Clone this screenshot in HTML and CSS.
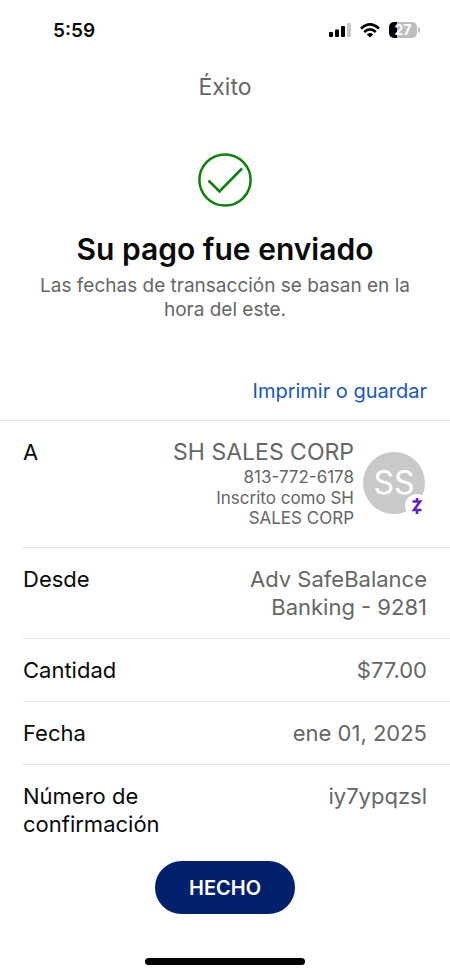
FILE: index.html
```html
<!DOCTYPE html>
<html lang="es">
<head>
<meta charset="utf-8">
<meta name="viewport" content="width=device-width, initial-scale=1">
<title>Éxito</title>
<link rel="stylesheet" href="styles.css">
</head>
<body>
<div class="status">
  <span class="time">5:59</span>
  <div class="indicators">
    <svg width="22" height="14" viewBox="0 0 22 14" aria-hidden="true"><rect x="0" y="9" width="4" height="5" rx="1"/><rect x="6" y="6.5" width="4" height="7.5" rx="1"/><rect x="12" y="3" width="4" height="11" rx="1"/><rect x="18" y="0" width="4" height="14" rx="1" fill="#c8c8c8"/></svg>
    <svg width="20" height="15" viewBox="0 0 20 15" fill="none" stroke="#000" stroke-width="2.6" aria-hidden="true"><path d="M1 5.6Q10-2.8 19 5.6M4.2 9Q10 3.6 15.8 9"/><path d="M10 14.6 6.8 11.4Q10 8.6 13.2 11.4Z" fill="#000" stroke="none"/></svg>
    <span class="battery"><span class="level">27</span></span>
  </div>
</div>
<header class="title">Éxito</header>
<main>
  <section class="hero">
    <svg class="check" width="54" height="54" viewBox="0 0 54 54" fill="none" stroke="#0d800d" aria-hidden="true"><circle cx="27" cy="27" r="25.6" stroke-width="2.5"/><path d="M10.5 27.5 21.5 38.5 44 15.5" stroke-width="2.6"/></svg>
    <h1>Su pago fue enviado</h1>
    <p>Las fechas de transacción se basan en la hora del este.</p>
  </section>
  <div class="print"><a href="#">Imprimir o guardar</a></div>
  <dl>
    <div class="row recipient">
      <dt>A</dt>
      <dd>
        <div class="payee"><div class="name">SH SALES CORP</div><div class="phone">813-772-6178</div><div class="alias">Inscrito como SH SALES CORP</div></div>
        <div class="avatar">SS<span class="badge"><svg width="12" height="18" viewBox="0 0 12 18" fill="none" stroke="#6420c8" stroke-width="2.6" aria-hidden="true"><path d="M1.5 4.5H9L3 13H10.5M6 1V4.5M6 13V17"/></svg></span></div>
      </dd>
    </div>
    <div class="row account"><dt>Desde</dt><dd>Adv SafeBalance Banking - 9281</dd></div>
    <div class="row"><dt>Cantidad</dt><dd>$77.00</dd></div>
    <div class="row"><dt>Fecha</dt><dd>ene 01, 2025</dd></div>
    <div class="row confirmation"><dt>Número de confirmación</dt><dd>iy7ypqzsl</dd></div>
  </dl>
</main>
<footer><button type="button">HECHO</button><div class="home"></div></footer>
</body>
</html>
```
FILE: styles.css
```css
* { box-sizing: border-box; }
body { margin: 0; min-height: 100vh; display: flex; flex-direction: column; background: #fff; color: #0a0a0a; font-family: Inter, "Liberation Sans", sans-serif; }
.status { display: flex; justify-content: space-between; align-items: center; height: 60px; padding: 0 33px 0 53px; }
.time { font-size: 19px; font-weight: 600; }
.indicators { display: flex; align-items: center; gap: 9px; }
.battery { position: relative; width: 28px; height: 16px; border-radius: 5px; background: linear-gradient(90deg, #000 27%, #bdbdbd 27%); }
.battery::after { content: ""; position: absolute; right: -3px; top: 5px; width: 2px; height: 6px; border-radius: 0 2px 2px 0; background: #bdbdbd; }
.level { display: block; color: #fff; text-align: center; font-size: 14px; line-height: 16px; font-weight: 700; }
.title { padding: 12px 0; text-align: center; font-size: 23px; line-height: 30px; color: #666; }
.hero { display: flex; flex-direction: column; align-items: center; padding: 39px 32px 0; text-align: center; }
h1 { margin: 24px 0 7px; font-size: 30px; line-height: 36px; font-weight: 600; }
.hero p { margin: 0; font-size: 19px; line-height: 24px; color: #666; }
.print { padding: 54px 23px 14px; text-align: right; font-size: 20px; line-height: 30px; }
.print a { color: #1558c0; text-decoration: none; }
dl { margin: 0; border-top: 1px solid #e3e3e3; font-size: 22px; line-height: 28px; }
.row { display: flex; justify-content: space-between; gap: 24px; margin-left: 23px; padding: 17px 23px 17px 0; border-bottom: 1px solid #e3e3e3; }
.row:last-child { border-bottom: 0; padding-bottom: 0; }
dd { margin: 0; color: #666; text-align: right; }
.account dd { max-width: 200px; }
.confirmation dt { max-width: 160px; }
.recipient { padding-right: 25px; padding-bottom: 19px; }
.recipient dd { display: flex; gap: 9px; align-items: center; }
.name { font-size: 23px; }
.phone, .alias { font-size: 17px; line-height: 20px; }
.phone { line-height: 22px; }
.alias { max-width: 150px; margin-left: auto; }
.avatar { position: relative; width: 62px; height: 62px; border-radius: 50%; background: #c9c9c9; color: #fff; text-align: center; font-size: 32px; line-height: 62px; }
.badge { position: absolute; right: -4px; bottom: -4px; display: grid; place-items: center; width: 24px; height: 24px; border-radius: 50%; background: #fff; }
footer { display: flex; flex-direction: column; align-items: center; margin-top: auto; padding-bottom: 11px; }
button { width: 140px; height: 53px; border: 0; border-radius: 27px; background: #02206b; color: #fff; font: 600 20px Inter, sans-serif; }
.home { width: 160px; height: 7px; margin-top: 44px; border-radius: 4px; background: #000; }
```
